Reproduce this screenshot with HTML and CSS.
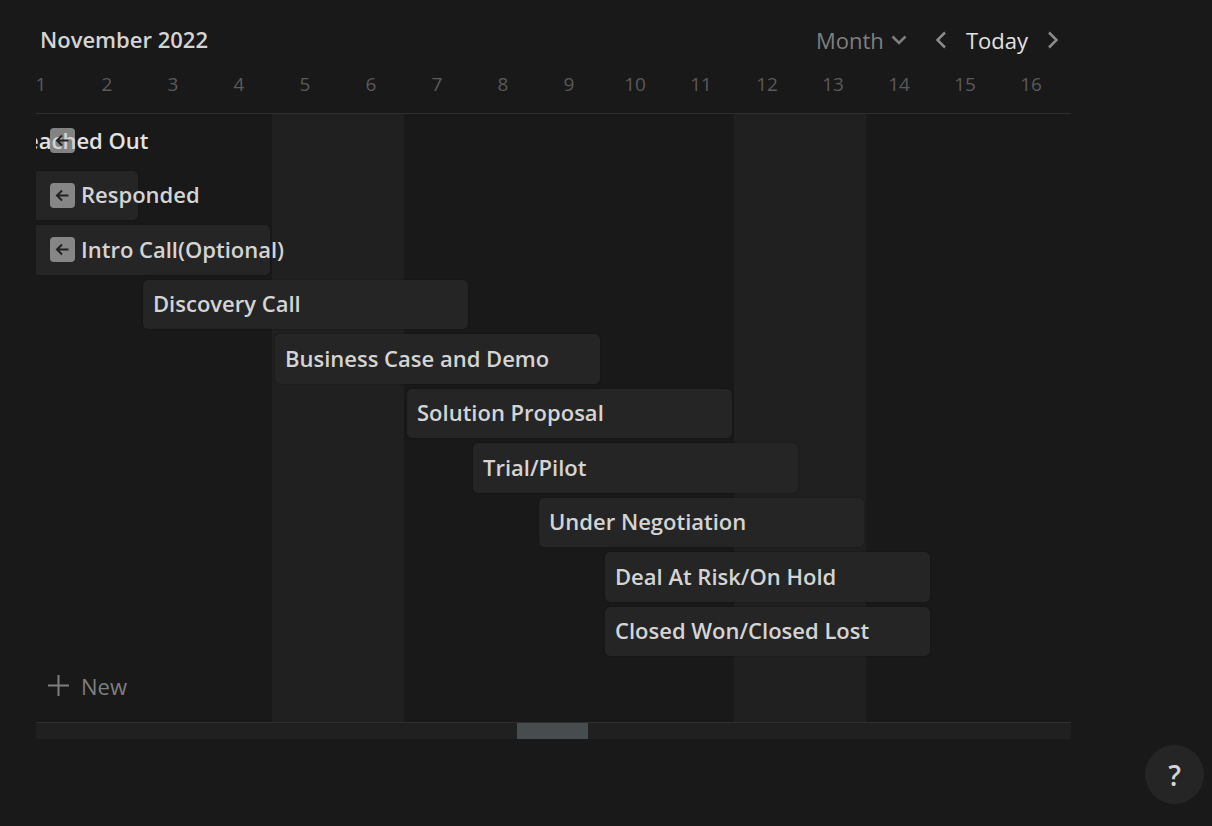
FILE: index.html
```html
<!DOCTYPE html>
<html lang="en">
    <head>
        <meta charset="UTF-8" />
        <meta content="width=device-width, initial-scale=1.0" name="viewport" />
        <title>Timeline</title>
        <link rel="stylesheet" href="styles.css">
    </head>

    <body>
        <main class="timeline">
            <header class="toolbar">
                <h1 class="title">November 2022</h1>
                <div class="controls">
                    <label class="scale">
                        <select class="scale-select" aria-label="Time scale">
                            <option>Day</option>
                            <option>Week</option>
                            <option selected>Month</option>
                        </select>
                        <svg class="chevron" width="16" height="10" viewBox="0 0 16 10"><path d="M1.5 1.5 8 8l6.500-6.500" /></svg>
                    </label>
                    <button class="nav-btn" aria-label="Previous">
                        <svg width="12" height="18" viewBox="0 0 12 18"><path d="M10 1.500 2.500 9l7.500 7.500" /></svg>
                    </button>
                    <button class="today-btn">Today</button>
                    <button class="nav-btn" aria-label="Next">
                        <svg width="12" height="18" viewBox="0 0 12 18"><path d="M2 1.500 9.500 9 2 16.500" /></svg>
                    </button>
                </div>
            </header>

            <div class="days">
                <span>1</span><span>2</span><span>3</span><span>4</span>
                <span>5</span><span>6</span><span>7</span><span>8</span>
                <span>9</span><span>10</span><span>11</span><span>12</span>
                <span>13</span><span>14</span><span>15</span><span>16</span>
            </div>

            <section class="chart">
                <div class="weekends">
                    <span class="weekend first"></span>
                    <span class="weekend second"></span>
                </div>
                <div class="content">
                    <div class="rows">
                        <div class="row">
                            <div class="item offscreen reached"><span class="label">Reached Out</span></div>
                            <button class="jump over" aria-label="Scroll to start">
                                <svg width="15" height="13" viewBox="0 0 15 13"><path d="M13.500 6.500H2M7 1.500l-5 5 5 5" /></svg>
                            </button>
                        </div>
                        <div class="row">
                            <div class="item continued responded">
                                <button class="jump" aria-label="Scroll to start">
                                    <svg width="15" height="13" viewBox="0 0 15 13"><path d="M13.500 6.500H2M7 1.500l-5 5 5 5" /></svg>
                                </button>
                                <span class="label">Responded</span>
                            </div>
                        </div>
                        <div class="row">
                            <div class="item continued intro">
                                <button class="jump" aria-label="Scroll to start">
                                    <svg width="15" height="13" viewBox="0 0 15 13"><path d="M13.500 6.500H2M7 1.500l-5 5 5 5" /></svg>
                                </button>
                                <span class="label">Intro Call(Optional)</span>
                            </div>
                        </div>
                        <div class="row"><div class="item discovery"><span class="label">Discovery Call</span></div></div>
                        <div class="row"><div class="item demo"><span class="label">Business Case and Demo</span></div></div>
                        <div class="row"><div class="item proposal"><span class="label">Solution Proposal</span></div></div>
                        <div class="row"><div class="item trial"><span class="label">Trial/Pilot</span></div></div>
                        <div class="row"><div class="item negotiation"><span class="label">Under Negotiation</span></div></div>
                        <div class="row"><div class="item hold"><span class="label">Deal At Risk/On Hold</span></div></div>
                        <div class="row"><div class="item closed"><span class="label">Closed Won/Closed Lost</span></div></div>
                    </div>
                    <button class="new-btn">
                        <svg width="21" height="21" viewBox="0 0 21 21"><path d="M10.500 0v21M0 10.500h21" /></svg>
                        New
                    </button>
                </div>
            </section>

            <div class="scrollbar"><div class="thumb"></div></div>
        </main>

        <button class="help-btn" aria-label="Help">?</button>
    </body>
</html>
```

FILE: styles.css
```css
* {
    box-sizing: border-box;
}

body {
    margin: 0;
    background: #191919;
    color: #d4d4d4;
    font-family: "Open Sans", "Noto Sans", sans-serif;
    font-size: 22px;
    line-height: 30px;
}

button,
select {
    margin: 0;
    padding: 0;
    border: 0;
    background: none;
    color: inherit;
    font: inherit;
    cursor: pointer;
}

svg {
    display: block;
    fill: none;
    stroke: currentColor;
    stroke-width: 2;
}

.timeline {
    padding: 20px 141px 0 36px;
}

/* toolbar */
.toolbar {
    display: flex;
    justify-content: space-between;
    align-items: flex-start;
    height: 40px;
    padding: 4px 12px 0 4px;
}
.title {
    margin: 0;
    font-size: 22px;
    font-weight: 600;
}
.controls {
    display: flex;
    align-items: center;
    padding-top: 1px;
    color: #7f7f7f;
}
.scale {
    display: flex;
    align-items: center;
    gap: 7px;
    margin-right: 28px;
}
.scale-select {
    appearance: none;
}
.nav-btn {
    color: #8a8a8a;
}
.nav-btn svg,
.chevron {
    stroke-width: 2.5;
}
.today-btn {
    margin: 0 19px;
    color: #e2e2e2;
}

.days,
.weekends,
.row {
    display: grid;
    grid-template-columns: repeat(16, 66px);
    margin-left: -28px;
}
.days {
    height: 53px;
    padding-top: 9px;
    color: #5a5a5a;
    font-size: 19px;
    text-align: center;
}

.chart {
    display: grid;
    grid-template-columns: minmax(0, 1fr);
    overflow: hidden;
    border-top: 1px solid #2f2f2f;
    border-bottom: 1px solid #2f2f2f;
}
.weekends,
.content {
    grid-area: 1 / 1;
}
.weekend {
    background: #202020;
}
.first {
    grid-column: 5 / span 2;
}
.second {
    grid-column: 12 / span 2;
}

.content {
    position: relative;
}
.rows {
    display: grid;
    grid-auto-rows: 1fr;
    height: 545px;
}
.row {
    padding: 2px 0 3px;
}
.item {
    grid-row: 1;
    display: flex;
    align-items: center;
    margin: 0 2px 0 3px;
    padding-left: 10px;
    border-radius: 5px;
    background: #252525;
    box-shadow: 0 0 2px rgba(0, 0, 0, 0.4);
    font-weight: 600;
    white-space: nowrap;
}
.label {
    padding-bottom: 2px;
}
.continued {
    gap: 6px;
    margin-left: 0;
    padding-left: 42px;
}
.offscreen {
    margin-left: 0;
    padding-left: 4px;
    background: none;
    box-shadow: none;
    color: #e2e2e2;
}
.reached { grid-column: 1 / span 2; }
.responded { grid-column: 1 / span 2; }
.intro { grid-column: 1 / span 4; }
.discovery { grid-column: 3 / span 5; }
.demo { grid-column: 5 / span 5; }
.proposal { grid-column: 7 / span 5; }
.trial { grid-column: 8 / span 5; }
.negotiation { grid-column: 9 / span 5; }
.hold { grid-column: 10 / span 5; }
.closed { grid-column: 10 / span 5; }

.jump {
    display: grid;
    flex: none;
    place-items: center;
    width: 25px;
    height: 25px;
    border-radius: 4px;
    background: rgba(200, 200, 200, 0.6);
    color: #202020;
}
/* lies over the label of an item that is out of view */
.over {
    grid-area: 1 / 1;
    align-self: center;
    margin-left: 42px;
    z-index: 1;
}

.new-btn {
    display: flex;
    align-items: center;
    gap: 12px;
    height: 63px;
    padding: 0 0 10px 12px;
    color: #7f7f7f;
}

.scrollbar {
    height: 16px;
    background: #202020;
}
.thumb {
    width: 71px;
    height: 100%;
    margin-left: 481px;
    background: #474d4f;
}

.help-btn {
    position: fixed;
    right: 8px;
    bottom: 22px;
    width: 59px;
    height: 59px;
    border-radius: 50%;
    background: #252525;
    font-size: 28px;
    font-weight: 600;
}
```
